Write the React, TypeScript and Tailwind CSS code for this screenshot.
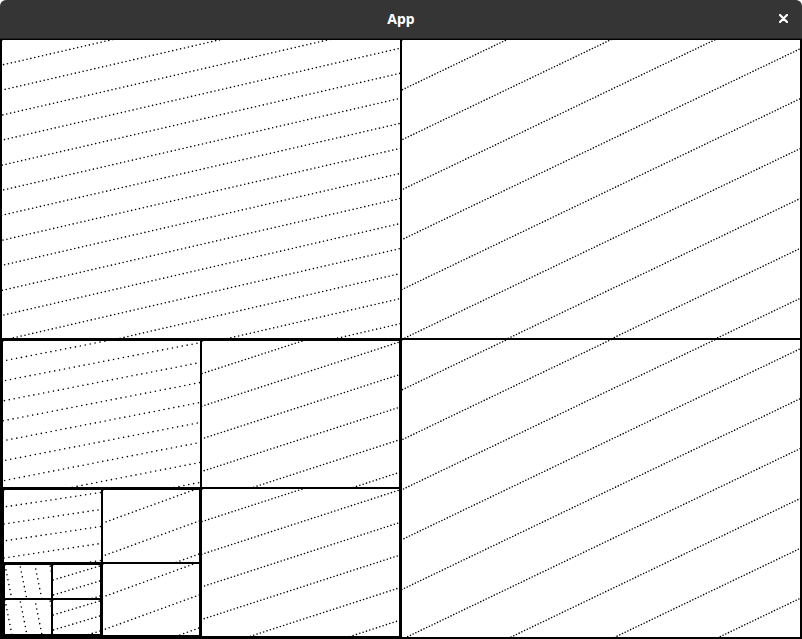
type Hatch = { angle: number; gap: number; dot: number }

const Dotted = ({ angle, gap, dot }: Hatch) => {
    const a = (angle * Math.PI) / 180
    const dx = Math.cos(a), dy = Math.sin(a)
    const nx = -dy, ny = dx
    const count = Math.ceil(1000 / gap)
    const lines = []
    for (let k = -count; k <= count; k++) {
        const cx = k * gap * nx, cy = k * gap * ny
        lines.push(
            <line key={k} x1={cx - dx * 1200} y1={cy - dy * 1200} x2={cx + dx * 1200} y2={cy + dy * 1200} />
        )
    }
    return (
        <div className="relative bg-white overflow-hidden">
            <svg className="absolute inset-0 w-full h-full">
                <g stroke="#000" strokeWidth="1.6" strokeLinecap="round" strokeDasharray={`0 ${dot}`}>
                    {lines}
                </g>
            </svg>
        </div>
    )
}

// each level: top-left, top-right, bottom-right hatches, bottom-left recurses
const levels: Hatch[][] = [
    [{ angle: -13, gap: 24.4, dot: 4 }, { angle: -25.6, gap: 45, dot: 3 }, { angle: -25.6, gap: 45, dot: 3 }],
    [{ angle: -11, gap: 19.6, dot: 5 }, { angle: -18, gap: 31, dot: 3.5 }, { angle: -18, gap: 31, dot: 3.5 }],
    [{ angle: -8.5, gap: 16.8, dot: 5 }, { angle: -20, gap: 31, dot: 4 }, { angle: -20, gap: 31, dot: 4 }],
]
const last: Hatch[] = [
    { angle: 78.7, gap: 14.7, dot: 5 },
    { angle: -16.7, gap: 14.4, dot: 4 },
    { angle: 78.7, gap: 14.7, dot: 5 },
    { angle: -16.7, gap: 14.4, dot: 4 },
]

const Quad = ({ depth }: { depth: number }) => {
    if (depth >= levels.length) {
        return (
            <div className="grid grid-cols-2 grid-rows-2 gap-[2px] bg-black border border-black">
                {last.map((h, i) => <Dotted key={i} {...h} />)}
            </div>
        )
    }
    const [tl, tr, br] = levels[depth]
    return (
        <div className={`grid grid-cols-2 grid-rows-2 gap-[2px] bg-black ${depth === 0 ? "h-full" : "border border-black"}`}>
            <Dotted {...tl} />
            <Dotted {...tr} />
            <Quad depth={depth + 1} />
            <Dotted {...br} />
        </div>
    )
}

export default function App() {
    return (
        <main className="w-[802px] h-[639px] flex flex-col bg-white" style={{ fontFamily: "'Noto Sans', 'Open Sans', sans-serif" }}>
            <header className="h-[39px] shrink-0 relative flex items-center justify-center bg-[#353535] rounded-t-[6px] border-b border-[#222]">
                <span className="text-white text-[14px] font-bold leading-none">App</span>
                <svg className="absolute right-[14px] top-[14px]" width="9" height="9" viewBox="0 0 9 9">
                    <path d="M1 1 L8 8 M8 1 L1 8" stroke="#fff" strokeWidth="2.2" strokeLinecap="round" />
                </svg>
            </header>
            <section className="flex-1 border-2 border-t border-black bg-black">
                <Quad depth={0} />
            </section>
        </main>
    )
}
